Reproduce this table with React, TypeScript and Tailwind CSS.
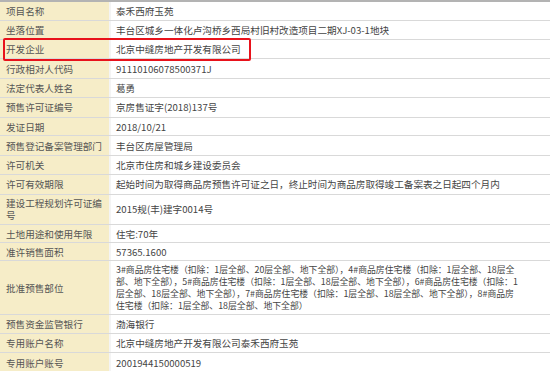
import React from 'react';

// ── 预售许可证信息表 ────────────────────────────────────────────────────────

interface Row {
  label: React.ReactNode;
  value: React.ReactNode;
  h:     string;
}

const longLines = [
  '3#商品房住宅楼（扣除：1层全部、20层全部、地下全部），4#商品房住宅楼（扣除：1层全部、18层全',
  '部、地下全部），5#商品房住宅楼（扣除：1层全部、18层全部、地下全部），6#商品房住宅楼（扣除：1',
  '层全部、18层全部、地下全部），7#商品房住宅楼（扣除：1层全部、18层全部、地下全部），8#商品房',
  '住宅楼（扣除：1层全部、18层全部、地下全部）',
];

const rows: Row[] = [
  { label: '项目名称',       value: '泰禾西府玉苑', h: 'h-[18.7px]' },
  { label: '坐落位置',       value: '丰台区城乡一体化卢沟桥乡西局村旧村改造项目二期XJ-03-1地块', h: 'h-[19.3px]' },
  { label: '开发企业',       value: '北京中缝房地产开发有限公司', h: 'h-[19.3px]' },
  { label: '行政相对人代码', value: '91110106078500371J', h: 'h-[19.6px]' },
  { label: '法定代表人姓名', value: '葛勇', h: 'h-[19.3px]' },
  { label: '预售许可证编号', value: '京房售证字(2018)137号', h: 'h-[19.6px]' },
  { label: '发证日期',       value: '2018/10/21', h: 'h-[18.6px]' },
  { label: '预售登记备案管理部门', value: '丰台区房屋管理局', h: 'h-[20px]' },
  { label: '许可机关',       value: '北京市住房和城乡建设委员会', h: 'h-[18.4px]' },
  { label: '许可有效期限',   value: '起始时间为取得商品房预售许可证之日，终止时间为商品房取得竣工备案表之日起四个月内', h: 'h-[20.2px]' },
  {
    label: (
      <div className="leading-[12.5px]">
        <span className="block">建设工程规划许可证编</span>
        <span className="block">号</span>
      </div>
    ),
    value: '2015规(丰)建字0014号',
    h: 'h-[30px]',
  },
  { label: '土地用途和使用年限', value: '住宅:70年', h: 'h-[18.5px]' },
  { label: '准许销售面积',   value: '57365.1600', h: 'h-[17.6px]' },
  {
    label: '批准预售部位',
    value: (
      <div className="text-[8.85px] leading-[12px]">
        {longLines.map((l, i) => <span key={i} className="block whitespace-nowrap">{l}</span>)}
      </div>
    ),
    h: 'h-[54px]',
  },
  { label: '预售资金监管银行', value: '渤海银行', h: 'h-[19.3px]' },
  { label: '专用账户名称',   value: '北京中缝房地产开发有限公司泰禾西府玉苑', h: 'h-[19px]' },
  { label: '专用账户账号',   value: '2001944150000519', h: 'h-[19.4px]' },
];

export default function App() {
  return (
    <div
      className="relative w-[550px] h-[371px] overflow-hidden bg-white text-[9.6px] leading-[12px]"
      style={{ fontFamily: '"Noto Sans CJK SC", "Noto Sans", sans-serif' }}
    >
      {/* 顶部灰线 */}
      <div className="h-[2px] bg-[#b3b3b3]" />

      {rows.map((r, i) => (
        <div key={i} className={`flex ${r.h} border-b border-[#d9d9d9]`}>
          <div className="w-[111px] shrink-0 flex items-center px-[6px] bg-[#f6edc8] text-[#555] border-r-2 border-[#f4f4f4] whitespace-nowrap">
            <div>{r.label}</div>
          </div>
          <div className="flex-1 flex items-center pl-[5px] text-[#444] whitespace-nowrap overflow-hidden">
            <div>{r.value}</div>
          </div>
        </div>
      ))}

      {/* 红框标注 */}
      <div className="absolute left-[3px] top-[38px] w-[248px] h-[23px] border-2 border-[#e8121b] rounded-[2px]" />
    </div>
  );
}
